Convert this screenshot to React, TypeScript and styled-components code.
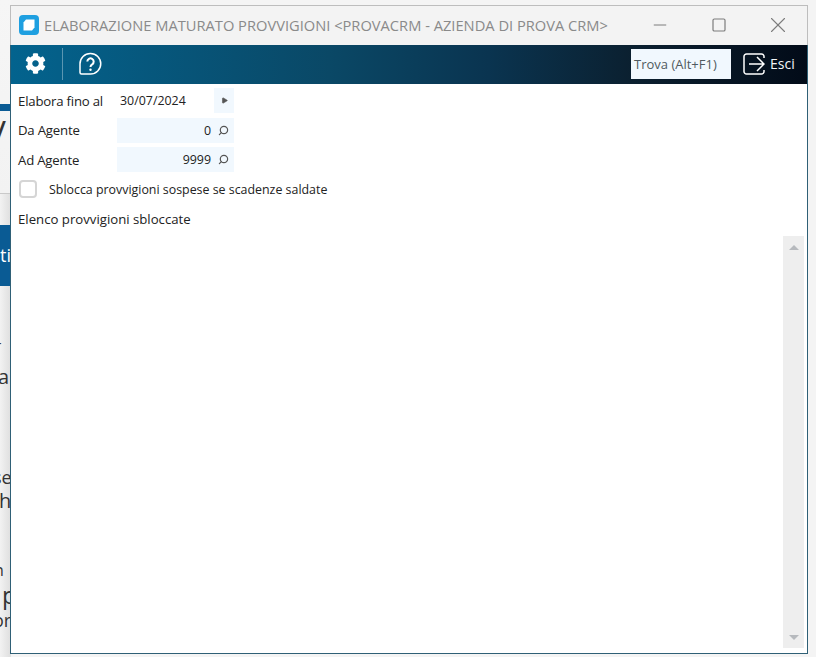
import React from 'react';
import styled, { createGlobalStyle } from 'styled-components';
import { FaCog } from 'react-icons/fa';
import { Minus, Play, Search, Square, X } from 'lucide-react';

const GlobalStyle = createGlobalStyle`
  html, body {
    margin: 0;
    padding: 0;
    overflow: hidden;
    background: #f4f4f4;
  }
  * {
    box-sizing: border-box;
  }
`;

const Desktop = styled.div`
  position: relative;
  width: 816px;
  height: 657px;
  overflow: hidden;
  background: #f4f4f4;
  font-family: 'Open Sans', 'Noto Sans', sans-serif;
  color: #222;
`;

// the page behind the window, only its left edge shows
const BehindPage = styled.div`
  position: absolute;
  top: 0;
  left: 0;
  width: 11px;
  height: 657px;
  overflow: hidden;
  background: linear-gradient(180deg, #f6f6f6 0, #f2f2f2 193px, #c9c9c9 193px, #c9c9c9 194px, transparent 194px),
    linear-gradient(90deg, #f2f2f2 0, #dedede 100%);
`;

const BehindText = styled.span<{ $top: number; $size: number; $left: number }>`
  position: absolute;
  top: ${(p) => p.$top}px;
  left: ${(p) => p.$left}px;
  font-size: ${(p) => p.$size}px;
  line-height: 1;
  color: #333;
`;

const BehindStrip = styled.div`
  position: absolute;
  top: 104px;
  left: 0;
  width: 11px;
  height: 7px;
  background: #0a5b94;
`;

const BehindBand = styled.div`
  position: absolute;
  top: 225px;
  left: 0;
  width: 11px;
  height: 61px;
  padding-top: 19px;
  background: #0a5b94;
  color: #fff;
  font-size: 18px;
  line-height: 22px;
  overflow: hidden;
  white-space: nowrap;
`;

const Window = styled.div`
  position: absolute;
  top: 5px;
  left: 10px;
  width: 798px;
  height: 649px;
  display: flex;
  flex-direction: column;
  border: 1px solid #2f6076;
  background: #fff;
`;

const TitleBar = styled.div`
  height: 40px;
  flex: none;
  margin: -1px -1px 0;
  display: flex;
  align-items: center;
  padding: 0 0 2px 8px;
  border: 1px solid #bdbdbd;
  border-bottom: none;
  background: #f3f3f3;
`;

const AppLogo = styled.svg`
  width: 20px;
  height: 20px;
  flex: none;
  margin-right: 5px;
`;

const TitleText = styled.div`
  flex: 1;
  font-size: 14.68px;
  color: #8a8a8a;
  white-space: nowrap;
`;

const WindowButton = styled.div`
  width: 59px;
  display: flex;
  justify-content: center;
  color: #7c7c7c;
`;

const Toolbar = styled.div`
  height: 39px;
  flex: none;
  display: flex;
  align-items: center;
  padding: 0 0 2px 14px;
  background: linear-gradient(90deg, #03638e 0, #0a4866 40%, #0a3450 60%, #0b2030 78%, #020b18 100%);
  color: #fff;
`;

const ToolDivider = styled.div`
  width: 1px;
  height: 32px;
  margin: 0 15px 0 16px;
  background: rgba(255, 255, 255, 0.35);
`;

const Spacer = styled.div`
  flex: 1;
`;

const FindBox = styled.div`
  width: 100px;
  height: 30px;
  margin-right: 12px;
  padding-left: 3px;
  display: flex;
  align-items: center;
  font-size: 13px;
  background: #f1f8fe;
  color: #4f5a60;
`;

const ExitButton = styled.div`
  display: flex;
  align-items: center;
  gap: 5px;
  width: 64px;
  font-size: 14px;
  color: #f2f6f8;
`;

const Body = styled.div`
  flex: 1;
  min-height: 0;
  display: flex;
  flex-direction: column;
  padding: 4px 3px 0 7px;
`;

const FormRow = styled.div`
  height: 25px;
  flex: none;
  margin-bottom: 4.5px;
  display: flex;
  align-items: center;
`;

const FieldLabel = styled.div`
  width: 99px;
  flex: none;
  font-size: 13.2px;
  letter-spacing: -0.2px;
  color: #222;
`;

const SectionLabel = styled.div`
  font-size: 13.2px;
  color: #222;
`;

const FieldBox = styled.div<{ $plain?: boolean }>`
  width: 117px;
  height: 25px;
  display: flex;
  align-items: center;
  justify-content: ${(p) => (p.$plain ? 'space-between' : 'flex-end')};
  padding: ${(p) => (p.$plain ? '0 0 0 3px' : '0 5px 0 0')};
  font-size: 12.4px;
  color: #222;
  background: ${(p) => (p.$plain ? 'transparent' : '#f1f8fe')};
`;

const DateStepper = styled.div`
  width: 20px;
  height: 25px;
  display: flex;
  align-items: center;
  justify-content: center;
  background: #f1f8fe;
  color: #555;
`;

const SearchMark = styled.span`
  display: flex;
  margin-left: 7px;
  color: #555;
  transform: scaleX(-1);
`;

const CheckMark = styled.div`
  width: 18px;
  height: 18px;
  margin: 0 12px 0 1px;
  border: 2px solid #d5d5d5;
  border-radius: 4px;
  background: #fff;
`;

const CheckLabel = styled.div`
  font-size: 12.4px;
  color: #222;
`;

const ListArea = styled.div`
  flex: 1;
  min-height: 0;
  display: flex;
  justify-content: flex-end;
  padding-bottom: 5px;
`;

const ScrollTrack = styled.div`
  width: 21px;
  display: flex;
  flex-direction: column;
  justify-content: space-between;
  align-items: center;
  padding: 9px 0 8px;
  background: #eeeeee;
`;

const ScrollArrow = styled.div<{ $down?: boolean }>`
  width: 0;
  height: 0;
  border-left: 5px solid transparent;
  border-right: 5px solid transparent;
  border-${(p) => (p.$down ? 'top' : 'bottom')}: 5px solid #b6b9bd;
`;

const HelpIcon = () => (
  <svg width="24" height="24" viewBox="0 0 24 24" fill="none" stroke="#fff" strokeWidth="1.5">
    <path d="M12.500 1.500a10 10 0 1 1 0 20.500H3.500a1.500 1.500 0 0 1-1.500-1.500V12A10.300 10.300 0 0 1 12.500 1.500z" />
    <path d="M9.300 9.500a3.200 3.200 0 1 1 4.900 2.800c-1.100.7-1.700 1.300-1.700 2.600" strokeWidth="2" />
    <circle cx="12.500" cy="17.800" r="1.200" fill="#fff" stroke="none" />
  </svg>
);

const ExitIcon = () => (
  <svg width="22" height="22" viewBox="0 0 22 22" fill="none" stroke="#fff" strokeWidth="1.5">
    <path d="M21 5V3.500A2.500 2.500 0 0 0 18.500 1H3.500A2.500 2.500 0 0 0 1 3.500v15A2.500 2.500 0 0 0 3.500 21h15a2.500 2.500 0 0 0 2.500-2.500V17" />
    <path d="M6 11h15M14 4l7 7-7 7" />
  </svg>
);

const App: React.FC = () => {
  return (
    <>
      <GlobalStyle />
      <Desktop>
        <BehindPage>
          <BehindStrip />
          <BehindText $top={116} $left={-7} $size={36}>/</BehindText>
          <BehindBand>tic</BehindBand>
          <BehindText $top={336} $left={-3} $size={14}>-</BehindText>
          <BehindText $top={367} $left={-2} $size={20}>a</BehindText>
          <BehindText $top={468} $left={-7} $size={18}>se</BehindText>
          <BehindText $top={491} $left={-1} $size={20}>h</BehindText>
          <BehindText $top={562} $left={-6} $size={16}>n</BehindText>
          <BehindText $top={583} $left={2} $size={24}>p</BehindText>
          <BehindText $top={611} $left={-7} $size={18}>or</BehindText>
        </BehindPage>
        <Window>
          <TitleBar>
            <AppLogo viewBox="0 0 20 20">
              <rect width="20" height="20" rx="4" fill="#1e9fe0" />
              <path d="M7 4.500h8.500v8L13 15.500H4.500v-8z" fill="#fff" />
            </AppLogo>
            <TitleText>ELABORAZIONE MATURATO PROVVIGIONI &lt;PROVACRM - AZIENDA DI PROVA CRM&gt;</TitleText>
            <WindowButton>
              <Minus size={20} strokeWidth={1.2} />
            </WindowButton>
            <WindowButton>
              <Square size={16} strokeWidth={1.8} />
            </WindowButton>
            <WindowButton>
              <X size={26} strokeWidth={1} />
            </WindowButton>
          </TitleBar>
          <Toolbar>
            <FaCog size={21} />
            <ToolDivider />
            <HelpIcon />
            <Spacer />
            <FindBox>Trova (Alt+F1)</FindBox>
            <ExitButton>
              <ExitIcon />
              Esci
            </ExitButton>
          </Toolbar>
          <Body>
            <FormRow>
              <FieldLabel>Elabora fino al</FieldLabel>
              <FieldBox $plain>
                30/07/2024
                <DateStepper>
                  <Play size={7} fill="#555" />
                </DateStepper>
              </FieldBox>
            </FormRow>
            <FormRow>
              <FieldLabel>Da Agente</FieldLabel>
              <FieldBox>
                0
                <SearchMark>
                  <Search size={11} strokeWidth={2.6} />
                </SearchMark>
              </FieldBox>
            </FormRow>
            <FormRow>
              <FieldLabel>Ad Agente</FieldLabel>
              <FieldBox>
                9999
                <SearchMark>
                  <Search size={11} strokeWidth={2.6} />
                </SearchMark>
              </FieldBox>
            </FormRow>
            <FormRow>
              <CheckMark />
              <CheckLabel>Sblocca provvigioni sospese se scadenze saldate</CheckLabel>
            </FormRow>
            <FormRow>
              <SectionLabel>Elenco provvigioni sbloccate</SectionLabel>
            </FormRow>
            <ListArea>
              <ScrollTrack>
                <ScrollArrow />
                <ScrollArrow $down />
              </ScrollTrack>
            </ListArea>
          </Body>
        </Window>
      </Desktop>
    </>
  );
};

export default App;
